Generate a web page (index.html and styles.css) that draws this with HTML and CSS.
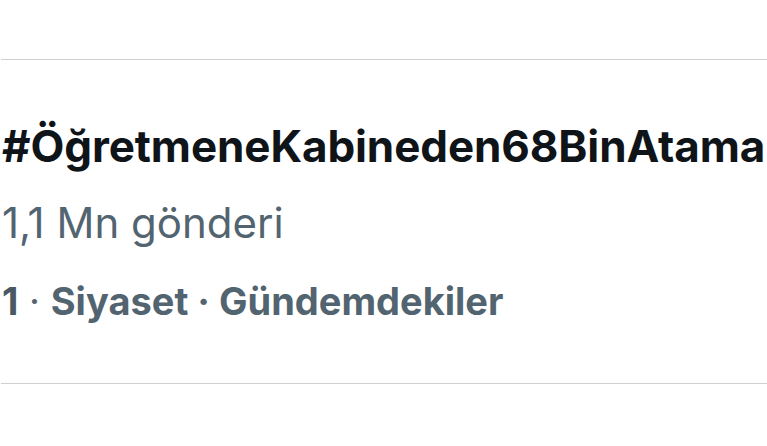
FILE: index.html
```html
<!DOCTYPE html>
<html lang="tr">
<head>
<meta charset="utf-8">
<link rel="stylesheet" href="styles.css">
</head>
<body>
<div class="trend">
  <div class="tag">#ÖğretmeneKabineden68BinAtama</div>
  <div class="count">1,1 Mn gönderi</div>
  <div class="meta"><span class="rank">1</span><span class="dot"> · </span>Siyaset · Gündemdekiler</div>
</div>
</body>
</html>
```
FILE: styles.css
```css
html, body {
  margin: 0;
  padding: 0;
  background: #ffffff;
}
body {
  width: 767px;
  height: 446px;
  overflow: hidden;
  padding-top: 59px;
  box-sizing: border-box;
}
.trend {
  margin-left: 1px;
  border-top: 1px solid #cfcfcf;
  border-bottom: 1px solid #cfcfcf;
  height: 325px;
  box-sizing: border-box;
  padding-top: 60px;
  padding-left: 1px;
  display: flex;
  flex-direction: column;
  font-family: Inter, "Noto Sans", sans-serif;
}
.tag {
  font-size: 44px;
  font-weight: 700;
  color: #0f1419;
  line-height: 53px;
  white-space: nowrap;
  letter-spacing: -0.1px;
}
.count {
  margin-top: 24px;
  font-size: 42px;
  font-weight: 400;
  color: #536471;
  line-height: 51px;
  white-space: nowrap;
}
.meta {
  margin-top: 30px;
  font-size: 38px;
  font-weight: 700;
  color: #536471;
  line-height: 46px;
  white-space: nowrap;
}
.rank {
  color: #4a5863;
}
.dot {
  font-weight: 400;
}
```
